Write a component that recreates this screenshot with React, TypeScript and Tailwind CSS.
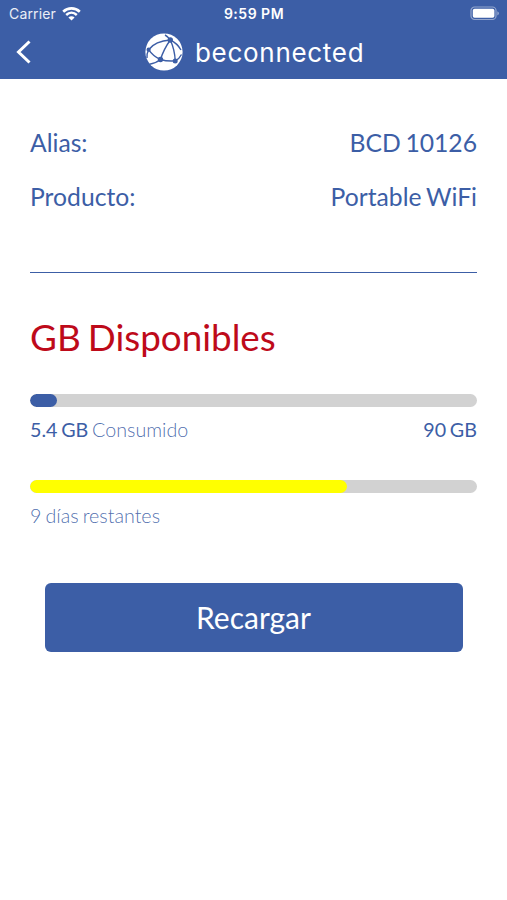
import type { ReactNode } from 'react'

function StatusBar() {
  return (
    <div className="grid h-7 grid-cols-3 items-center pl-[9px] pr-[7px] font-['Inter',sans-serif] text-white">
      <div className="flex items-center gap-[6px]">
        <span className="text-[14px] leading-none tracking-[0.15px] text-white/90">Carrier</span>
        <svg width="19" height="15" viewBox="0 0 19 15" fill="none" stroke="currentColor">
          <path d="M1.2 4.7C5.9 .3 13.1 .3 17.8 4.7" strokeWidth="2.7" />
          <path d="M4.2 8C7.3 5.1 11.7 5.1 14.8 8" strokeWidth="2.5" />
          <path d="M6.4 10.5C8.2 8.8 10.8 8.8 12.6 10.5L9.5 13.6Z" fill="currentColor" stroke="none" />
        </svg>
      </div>
      <span className="-ml-[1px] text-center text-[14px] font-semibold leading-none tracking-[0.5px]">9:59 PM</span>
      <svg className="-mt-[2px] justify-self-end" width="30" height="15" viewBox="0 0 30 15" fill="none">
        <rect x="1" y="1" width="25" height="12.5" rx="3.6" stroke="#fff" strokeOpacity=".45" strokeWidth="1.2" />
        <rect x="2.8" y="2.8" width="21.6" height="9" rx="1.8" fill="#fff" />
        <path d="M27.4 5.2C29.4 6 29.4 8.6 27.4 9.4Z" fill="#fff" fillOpacity=".5" />
      </svg>
    </div>
  )
}

function Globe() {
  return (
    <svg width="38" height="38" viewBox="0 0 38 38" fill="none">
      <circle cx="19" cy="19" r="18.6" fill="#fff" />
      <g stroke="#3c5ea6" strokeWidth="1.4">
        <path d="M20 2C22 3 24 5 25.3 7C29.5 9 33.5 12.5 36 17" />
        <path d="M25.3 7C16 7.5 8 11 3.6 16.7" />
        <path d="M25.3 7C21 13 17.5 20 15.5 26.500" />
        <path d="M25.3 7C28.5 14 30 21 30.2 27.9" />
        <path d="M3.6 16.7C6.5 21 10.5 24.5 15.5 26.5C20 27.9 25 28.3 30.2 27.9" />
        <path d="M30.2 27.9C33 26.5 35 24.5 36.5 21.5" />
        <path d="M3.6 16.7C2.2 19.5 1.6 22 2 25" />
        <path d="M15.5 26.5C12 29.2 8.500 30.8 4.5 31.2" />
      </g>
      <g fill="#3c5ea6">
        <circle cx="25.3" cy="7" r="2.7" />
        <circle cx="3.6" cy="16.7" r="2.1" />
        <circle cx="15.5" cy="26.5" r="2.7" />
        <circle cx="30.2" cy="27.9" r="2.5" />
      </g>
    </svg>
  )
}

function Header() {
  return (
    <header className="h-[79px] bg-[#3c5ea6]">
      <StatusBar />
      <div className="flex h-[48px] items-center pl-4 text-white">
        <svg width="16" height="24" viewBox="0 0 16 24" fill="none" stroke="currentColor" strokeWidth="3">
          <path d="M13.5 1.5L2.5 12L13.5 22.5" />
        </svg>
        <div className="ml-[113px] flex items-center gap-[12px]">
          <Globe />
          <span className="pt-[2px] font-['Inter',sans-serif] text-[26px] leading-none tracking-[0.7px]">beconnected</span>
        </div>
      </div>
    </header>
  )
}

function Row({ label, value }: { label: string; value: string }) {
  return (
    <div className="flex h-[54px] items-center justify-between text-[24.7px]">
      <span>{label}</span>
      <span>{value}</span>
    </div>
  )
}

function Progress({ percent, color, children }: { percent: number; color: string; children: ReactNode }) {
  return (
    <div className="h-[86px]">
      <div className="h-[13px] overflow-hidden rounded-full bg-[#d2d2d2]">
        <div className={`h-full rounded-full ${color}`} style={{ width: `${percent}%` }}></div>
      </div>
      <div className="mt-[11px] flex justify-between text-[19.7px] leading-6 [word-spacing:-1.3px]">{children}</div>
    </div>
  )
}

export default function App() {
  return (
    <div className="min-h-[900px] w-full bg-white font-['Lato',sans-serif] text-[#3c5ea6]">
      <Header />

      <main className="px-[30px] pt-[37px]">
        <section className="h-[157px] border-b border-[#3c5ea6] [word-spacing:-1.6px]">
          <Row label="Alias:" value="BCD 10126" />
          <Row label="Producto:" value="Portable WiFi" />
        </section>

        <h1 className="mt-[40px] mb-[33px] text-[36.8px] leading-[48px] text-[#be0a1a] [word-spacing:-2.3px]">GB Disponibles</h1>

        <Progress percent={6} color="bg-[#3c5ea6]">
          <span>
            5.4 GB <span className="font-light text-[#3c5ea6]/90">Consumido</span>
          </span>
          <span>90 GB</span>
        </Progress>
        <Progress percent={71} color="bg-[#ffff00]">
          <span className="font-light text-[#3c5ea6]/90">9 días restantes</span>
        </Progress>

        <div className="pl-[15px] pr-[14px] pt-[17px]">
          <button className="h-[69px] w-full rounded-[6px] bg-[#3c5ea6] pr-px text-[30px] text-white">Recargar</button>
        </div>
      </main>
    </div>
  )
}
